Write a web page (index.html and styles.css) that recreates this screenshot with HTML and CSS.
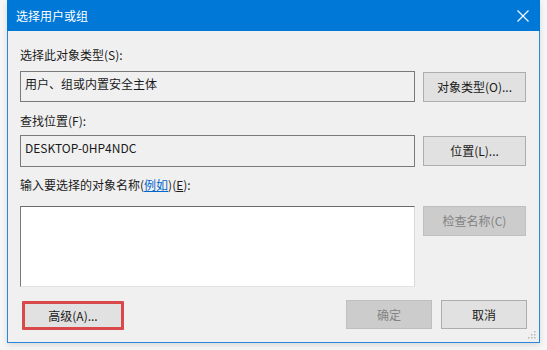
FILE: index.html
```html
<!DOCTYPE html>
<html lang="zh-CN">
<head>
<meta charset="utf-8">
<title>选择用户或组</title>
<link rel="stylesheet" href="styles.css">
</head>
<body>
<div class="window">
  <div class="titlebar">
    <span class="title">选择用户或组</span>
    <svg class="close" width="12" height="12" viewBox="0 0 12 12"><path d="M0.5 0.5 L11.5 11.5 M11.5 0.5 L0.5 11.5" stroke="#fff" stroke-width="1.1" fill="none"/></svg>
  </div>
  <div class="content">
    <div class="label l1">选择此对象类型(S):</div>
    <div class="row r1">
      <div class="field">用户、组或内置安全主体</div>
      <div class="btn">对象类型(O)...</div>
    </div>
    <div class="label l2">查找位置(F):</div>
    <div class="row r2">
      <div class="field">DESKTOP-0HP4NDC</div>
      <div class="btn">位置(L)...</div>
    </div>
    <div class="label l3">输入要选择的对象名称(<span class="link">例如</span>)(<u>E</u>):</div>
    <div class="row r3">
      <div class="textarea"></div>
      <div class="btn disabled check">检查名称(C)</div>
    </div>
    <div class="bottom">
      <div class="adv-wrap"><div class="btn adv">高级(A)...</div></div>
      <div class="spacer"></div>
      <div class="btn disabled ok">确定</div>
      <div class="btn cancel">取消</div>
    </div>
  </div>
  <svg class="grip" width="8" height="8" viewBox="0 0 8 8">
    <rect x="6" y="0" width="1.5" height="1.5" fill="#b8b8b8"/>
    <rect x="3" y="3" width="1.5" height="1.5" fill="#b8b8b8"/>
    <rect x="6" y="3" width="1.5" height="1.5" fill="#b8b8b8"/>
    <rect x="0" y="6" width="1.5" height="1.5" fill="#b8b8b8"/>
    <rect x="3" y="6" width="1.5" height="1.5" fill="#b8b8b8"/>
    <rect x="6" y="6" width="1.5" height="1.5" fill="#b8b8b8"/>
  </svg>
</div>
</body>
</html>
```
FILE: styles.css
```css
* { box-sizing: border-box; }
html, body { margin: 0; padding: 0; }
body {
  background: #f6f6f6;
  width: 547px;
  height: 350px;
  overflow: hidden;
  font-family: "Noto Sans CJK SC", "Microsoft YaHei", sans-serif;
  font-size: 12px;
  color: #1a1a1a;
}
.window {
  position: relative;
  margin-left: 7px;
  width: 533px;
  height: 343px;
  background: #f0f0f0;
  border: 1px solid #2a86d8;
  border-top: none;
  box-shadow: 0 2px 6px rgba(0,0,0,0.12);
}
.titlebar {
  height: 31px;
  margin: 0 -1px;
  background: #0078d7;
  display: flex;
  align-items: center;
  padding-left: 9px;
  padding-right: 11px;
  justify-content: space-between;
}
.title { color: #fff; font-size: 12px; line-height: 16px; }
.close { display: block; }
.content {
  padding: 0 12px 0 12px;
}
.label { line-height: 16px; height: 16px; }
.l1 { margin-top: 16px; }
.l2 { margin-top: 11px; }
.l3 { margin-top: 10px; }
.link { color: #0066cc; text-decoration: underline; }
.row {
  display: grid;
  grid-template-columns: 395px 103px;
  column-gap: 8px;
  align-items: start;
}
.r1 { margin-top: 8px; }
.r2 { margin-top: 6px; }
.r3 { margin-top: 13px; }
.field {
  height: 31px;
  border: 1px solid #7a7a7a;
  background: #f0f0f0;
  padding: 4px 0 0 4px;
  line-height: 16px;
}
.r2 .field { height: 32px; }
.btn {
  height: 30px;
  background: #e1e1e1;
  border: 1px solid #adadad;
  display: flex;
  align-items: center;
  justify-content: center;
  line-height: 16px;
}
.r1 .btn { margin-top: 1px; }
.r2 .btn { margin-top: 1px; }
.disabled {
  background: #cccccc;
  border-color: #bfbfbf;
  color: #838383;
}
.textarea {
  height: 81px;
  background: #fff;
  border-top: 1px solid #6b6b6b;
  border-left: 1px solid #7a7a7a;
  border-right: 1px solid #d9d9d9;
  border-bottom: 1px solid #e3e3e3;
}
.check { height: 30px; }
.bottom {
  margin-top: 13px;
  display: flex;
  align-items: flex-start;
}
.adv-wrap {
  margin-left: 2px;
  width: 102px;
  height: 29px;
  border: 3px solid #d9494b;
  border-radius: 1px;
  margin-top: 1px;
}
.adv {
  height: 100%;
  border: none;
  background: #e1e1e1;
}
.spacer { flex: 1; }
.ok { width: 86px; height: 29px; margin-right: 9px; }
.cancel { width: 86px; height: 29px; }
.grip {
  position: absolute;
  right: 3px;
  bottom: 3px;
}
```
